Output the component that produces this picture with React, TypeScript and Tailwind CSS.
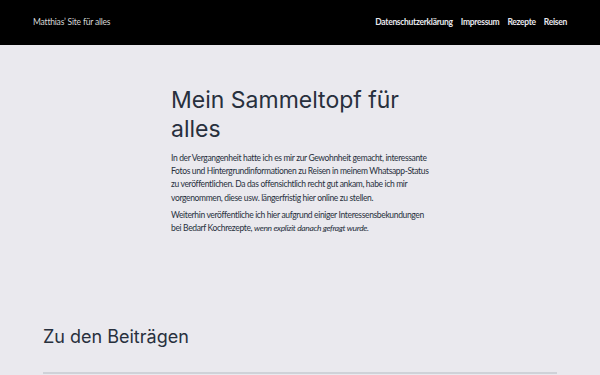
export default function App() {
  const nav = ['Datenschutzerklärung', 'Impressum', 'Rezepte', 'Reisen'];

  return (
    <div className="min-h-screen bg-[#eae9ee] font-['Lato',sans-serif] text-[#28303d]">
      <header className="h-[45px] bg-black flex items-center justify-between px-[33px]">
        <a className="text-[8.5px] text-[#d8d8d8] tracking-[-0.2px]">Matthias’ Site für alles</a>
        <nav className="flex gap-[8px] text-[8.5px] font-bold tracking-[-0.3px] text-[#e8e8ee]">
          {nav.map((item) => (
            <a key={item}>{item}</a>
          ))}
        </nav>
      </header>

      <main>
        <section className="w-[258px] mx-auto pt-[41px]">
          <h1 className="font-['Inter',sans-serif] text-[23px] leading-[29px] text-[#28303d]">
            Mein Sammeltopf für alles
          </h1>
          <div className="mt-[8px] text-[8.5px] leading-[13.2px] tracking-[-0.35px] whitespace-nowrap">
            <p>
              In der Vergangenheit hatte ich es mir zur Gewohnheit gemacht, interessante
              <br />
              Fotos und Hintergrundinformationen zu Reisen in meinem Whatsapp-Status
              <br />
              zu veröffentlichen. Da das offensichtlich recht gut ankam, habe ich mir
              <br />
              vorgenommen, diese usw. längerfristig hier online zu stellen.
            </p>
            <p className="mt-[4px]">
              Weiterhin veröffentliche ich hier aufgrund einiger Interessensbekundungen
              <br />
              bei Bedarf Kochrezepte, <em>wenn explizit danach gefragt wurde.</em>
            </p>
          </div>
        </section>

        <section className="w-[514px] mx-auto mt-[91px]">
          <h2 className="font-['Inter',sans-serif] text-[18px] leading-[22px] text-[#28303d]">
            Zu den Beiträgen
          </h2>
          <hr className="mt-[24px] border-0 border-t-2 border-[#cfd2d8]" />
        </section>
      </main>
    </div>
  );
}
